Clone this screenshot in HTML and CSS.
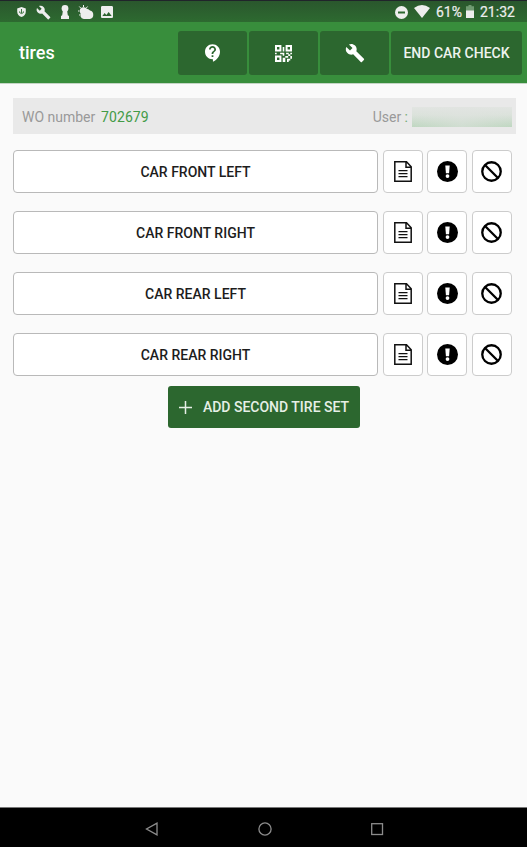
FILE: index.html
```
<!DOCTYPE html>
<html lang="en">
<head>
    <meta charset="UTF-8">
    <meta name="viewport" content="width=device-width, initial-scale=1.0">
    <title>tires</title>
    <link rel="stylesheet" href="styles.css">
</head>
<body>
    <svg class="sprite">
        <symbol id="wrench" viewBox="0 0 24 24">
            <path d="M22.7 19l-9.1-9.1c.9-2.3.4-5-1.5-6.9-2-2-5-2.4-7.4-1.3L9 6 6 9 1.6 4.7C.4 7.1.9 10.1 2.9 12.1c1.9 1.9 4.6 2.4 6.9 1.5l9.1 9.1c.4.4 1 .4 1.4 0l2.3-2.3c.5-.4.5-1.1.1-1.4z"/>
        </symbol>
        <symbol id="doc" viewBox="0 0 18 21">
            <path d="M.8.8h11.7l4.7 4.9v14.5H.8z M12 1v5.2h5" fill="none" stroke="#111" stroke-width="1.5"/>
            <path d="M4.5 9.6h9M4.5 12.6h9M4.5 15.6h9" stroke="#111" stroke-width="1.4"/>
        </symbol>
        <symbol id="alert" viewBox="0 0 20 20">
            <circle cx="10" cy="10" r="10"/>
            <path d="M7.9 4.2h4.2l-.6 7.4h-3z" fill="#fff"/>
            <circle cx="10" cy="14.4" r="1.8" fill="#fff"/>
        </symbol>
        <symbol id="block" viewBox="0 0 20 20">
            <circle cx="10" cy="10" r="8.8" fill="none" stroke="#000" stroke-width="2.2"/>
            <path d="M3.8 3.8l12.4 12.4" stroke="#000" stroke-width="2.2"/>
        </symbol>
    </svg>

    <div class="status-bar">
        <div class="status-left">
            <svg class="shield" viewBox="0 0 9 10"><path d="M4.5 0L8.8 1.5v3.2c0 2.4-1.7 4.4-4.3 5.3C1.9 9.1.2 7.1.2 4.7V1.5z"/><path d="M4.5 2v4M2.6 4.4v1.2q1.9 2 3.8 0V4.4" fill="none" stroke="#2c672f" stroke-width=".9"/></svg>
            <svg class="status-wrench"><use href="#wrench"/></svg>
            <svg class="keyhole" viewBox="0 0 8 14"><circle cx="4" cy="3.4" r="3.4"/><path d="M2 5h4l.8 5.3L8 11v3H0v-3l1.2-.7z"/></svg>
            <svg class="weather" viewBox="0 0 16 15"><circle cx="5.5" cy="6" r="3.7"/><path d="M5.5 0v2M1.3 1.5l1.5 1.6M0 6h1.5M1 10.4l1.2-1M9.6 1.5L8.3 3" stroke="#eee" stroke-width="1"/><path d="M5.8 14A3.8 3.8 0 0 1 3.5 7.5 4.8 4.8 0 0 1 12 5.6 4.3 4.3 0 0 1 11.8 14z"/></svg>
            <svg class="picture" viewBox="3 3 18 18"><path d="M21 19V5c0-1.1-.9-2-2-2H5c-1.1 0-2 .9-2 2v14c0 1.1.9 2 2 2h14c1.1 0 2-.9 2-2zM8.5 13.5l2.5 3.01L14.5 12l4.5 6H5l3.5-4.5z"/></svg>
        </div>
        <div class="status-right">
            <svg class="dnd" viewBox="0 0 13 13"><circle cx="6.5" cy="6.5" r="6.5"/><path d="M3 6.5h7" stroke="#2c672f" stroke-width="2"/></svg>
            <svg class="wifi" viewBox="0 0 16 13"><path d="M0 3Q8-3 16 3L8 13z"/></svg>
            <span class="percent">61%</span>
            <svg class="battery" viewBox="0 0 8 13"><path d="M2.5 0h3v1.3H8V6H0V1.3h2.5z" fill="#6f9a71"/><path d="M0 5.5h8V13H0z"/></svg>
            <span class="clock">21:32</span>
        </div>
    </div>

    <header class="app-bar">
        <h1>tires</h1>
        <button class="bar-btn">
            <svg class="help" viewBox="3 2 17 20"><path d="M11.5 2C6.81 2 3 5.81 3 10.5S6.81 19 11.5 19h.5v3c4.86-2.34 8-7 8-11.5C20 5.81 16.19 2 11.5 2zm1 14.5h-2v-2h2v2zm0-3.5h-2c0-3.25 3-3 3-5 0-1.1-.9-2-2-2s-2 .9-2 2h-2c0-2.21 1.79-4 4-4s4 1.79 4 4c0 2.5-3 2.75-3 5z"/></svg>
        </button>
        <button class="bar-btn">
            <svg class="qr" viewBox="0 0 17 17">
                <path d="M1 1h4.4v4.4H1zM11.6 1H16v4.4h-4.4zM1 11.6h4.4V16H1z" fill="none" stroke="#fff" stroke-width="2"/>
                <path d="M7.7 2h1.6v4.6H7.7zM0 7.7h1.7v1.6H0zM5.1 7.7h4.2v3.1H7.7V9.3H5.1zM11.1 7.7h2.6v1.6h-2.6zM15.3 7.7H17v1.6h-1.7zM13.2 9.3h2.1v1.8h-2.1zM10.3 11.1h2.9v1.7h-2.9zM15.3 11.1H17v2.6h-1.7zM7.7 12.8h2.6V17H7.7zM12 13.7h3.3v1.7h-1.6V17H12z"/>
            </svg>
        </button>
        <button class="bar-btn">
            <svg class="tool"><use href="#wrench"/></svg>
        </button>
        <button class="bar-btn end-btn">END CAR CHECK</button>
    </header>

    <main>
        <div class="info">
            <span class="info-label">WO number</span>
            <span class="info-number">702679</span>
            <span class="info-user">User <b>:</b></span>
            <span class="user-name"></span>
        </div>

        <div class="tires">
            <div class="tire-row">
                <button class="tire">CAR FRONT LEFT</button>
                <button class="action"><svg class="doc"><use href="#doc"/></svg></button>
                <button class="action"><svg><use href="#alert"/></svg></button>
                <button class="action"><svg><use href="#block"/></svg></button>
            </div>
            <div class="tire-row">
                <button class="tire">CAR FRONT RIGHT</button>
                <button class="action"><svg class="doc"><use href="#doc"/></svg></button>
                <button class="action"><svg><use href="#alert"/></svg></button>
                <button class="action"><svg><use href="#block"/></svg></button>
            </div>
            <div class="tire-row">
                <button class="tire">CAR REAR LEFT</button>
                <button class="action"><svg class="doc"><use href="#doc"/></svg></button>
                <button class="action"><svg><use href="#alert"/></svg></button>
                <button class="action"><svg><use href="#block"/></svg></button>
            </div>
            <div class="tire-row">
                <button class="tire">CAR REAR RIGHT</button>
                <button class="action"><svg class="doc"><use href="#doc"/></svg></button>
                <button class="action"><svg><use href="#alert"/></svg></button>
                <button class="action"><svg><use href="#block"/></svg></button>
            </div>
        </div>

        <button class="add-btn">
            <svg viewBox="0 0 13 13"><path d="M6.5 0v13M0 6.5h13" stroke="#e6efe6" stroke-width="1.5"/></svg>
            ADD SECOND TIRE SET
        </button>
    </main>

    <nav class="nav-bar">
        <svg viewBox="0 0 14 14"><path d="M12 1.2v11.6L1.5 7z"/></svg>
        <svg viewBox="0 0 14 14"><circle cx="7" cy="7" r="6.1"/></svg>
        <svg viewBox="0 0 14 14"><rect x="1.7" y="1.7" width="10.8" height="10.8"/></svg>
    </nav>
</body>
</html>
```

FILE: styles.css
```
* {
    box-sizing: border-box;
}
body {
    margin: 0;
    height: 847px;
    display: flex;
    flex-direction: column;
    background-color: #fafafa;
    font-family: Roboto, "Liberation Sans", sans-serif;
    overflow: hidden;
}
svg {
    display: block;
    flex: none;
}
.sprite {
    width: 0;
    height: 0;
    position: absolute;
}
button {
    display: flex;
    align-items: center;
    justify-content: center;
    padding: 0;
    border: none;
    font-family: inherit;
    font-size: 14px;
    font-weight: 500;
    cursor: pointer;
}

/* status bar */
.status-bar {
    height: 22px;
    display: flex;
    justify-content: space-between;
    padding: 1px 11px 0 17px;
    border-top: 1px solid #20242a;
    background: linear-gradient(#2a572d, #2d6a30);
    color: #eee;
    fill: #eee;
}
.status-left, .status-right {
    display: flex;
    align-items: center;
}
.shield {
    width: 9px;
    height: 10px;
}
.status-wrench {
    width: 15px;
    height: 15px;
    margin-left: 10px;
}
.keyhole {
    width: 8px;
    height: 14px;
    margin-left: 10px;
}
.weather {
    width: 16px;
    height: 15px;
    margin-left: 9px;
}
.picture {
    width: 12px;
    height: 12px;
    margin-left: 7px;
}
.dnd {
    width: 13px;
    height: 13px;
}
.wifi {
    width: 16px;
    height: 13px;
    margin: 0 6px 1px 6px;
}
.percent, .clock {
    font-size: 14px;
    line-height: 18px;
}
.percent {
    width: 26px;
    -webkit-text-stroke: 0.2px #eee;
}
.battery {
    width: 8px;
    height: 13px;
    margin: 0 6px 2px 4px;
}
.clock {
    width: 36px;
    -webkit-text-stroke: 0.2px #eee;
}

/* app bar */
.app-bar {
    height: 61px;
    display: flex;
    align-items: center;
    gap: 2px;
    padding: 1px 5px 0 19px;
    background-color: #388e3c;
    margin-bottom: 1px;
    box-shadow: 0 1px #c4d5c5;
}
.app-bar h1 {
    flex: 1;
    margin: 0;
    color: #fff;
    font-size: 18px;
    font-weight: 500;
    line-height: 24px;
}
.bar-btn {
    width: 69px;
    height: 44px;
    border-radius: 3px;
    background-color: #2c672f;
    color: #eef3ee;
    fill: #fff;
}
.end-btn {
    width: 131px;
}
.help {
    width: 15px;
    height: 18px;
}
.qr {
    width: 17px;
    height: 17px;
}
.tool {
    width: 20px;
    height: 20px;
}

/* content */
main {
    flex: 1;
    padding: 14px 11px 0 13px;
}
.info {
    height: 36px;
    display: flex;
    align-items: center;
    padding: 2px 4px 0 9px;
    background-color: #e9e9e9;
    color: #999;
    font-size: 14px;
}
.info-label {
    width: 79px;
}
.info-number {
    color: #439b47;
    letter-spacing: 0.1px;
}
.info-user {
    margin-left: auto;
    margin-right: 4px;
}
.info-user b {
    color: #73aa75;
    font-weight: 400;
}
.user-name {
    width: 100px;
    height: 20px;
    background: linear-gradient(90deg, #c0d6c100, #e0e3e080 50%, #c0d6c100), linear-gradient(#e2e5e2, #dbe2db 40%, #bfd7c1);
}
.tires {
    display: flex;
    flex-direction: column;
    gap: 18px;
    margin-top: 16px;
    padding-right: 4.5px;
}
.tire-row {
    display: grid;
    grid-template-columns: 1fr 40px 40px 40px;
    gap: 4.5px;
}
.tire, .action {
    height: 43px;
    background-color: #fff;
    border: 1px solid #b9b9b9;
    border-radius: 4px;
    color: #1d1d1d;
}
.action {
    border-color: #ccc;
}
.action svg {
    width: 21px;
    height: 21px;
}
.action .doc {
    width: 18px;
    height: 21px;
}
.add-btn {
    width: 192px;
    height: 42px;
    gap: 11px;
    margin: 10px auto 0 155px;
    border-radius: 3px;
    background-color: #2c672f;
    color: #e6efe6;
}
.add-btn svg {
    width: 13px;
    height: 13px;
}

/* android navigation */
.nav-bar {
    height: 40px;
    display: flex;
    justify-content: center;
    align-items: center;
    gap: 98.5px;
    padding: 2px 0 0 2px;
    border-top: 1px solid #777;
    background-color: #000;
}
.nav-bar svg {
    width: 14px;
    height: 14px;
    fill: none;
    stroke: #8c8c8c;
    stroke-width: 1.3;
}
```
